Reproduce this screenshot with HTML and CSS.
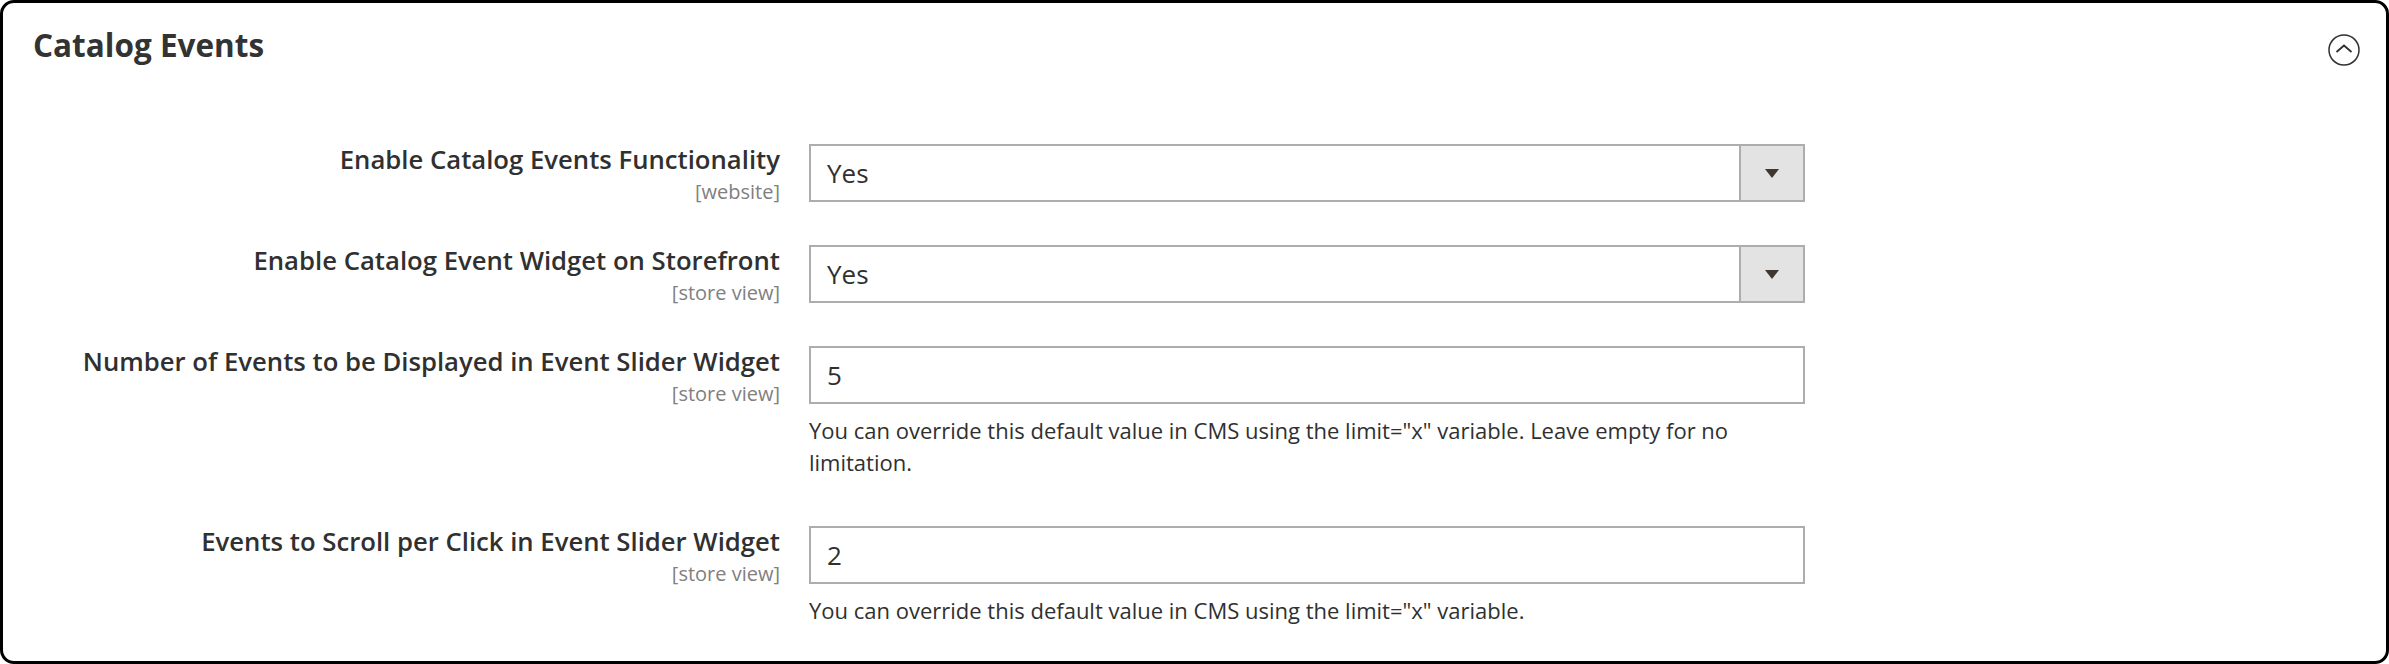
FILE: index.html
```html
<!DOCTYPE html>
<html lang="en">
<head>
    <meta charset="UTF-8">
    <meta name="viewport" content="width=device-width, initial-scale=1.0">
    <title>Catalog Events</title>
    <link rel="stylesheet" href="styles.css">
</head>
<body>
    <div class="section">
        <!-- section header -->
        <div class="section-head">
            <h2 class="section-title">Catalog Events</h2>
            <span class="toggle">
                <svg width="32" height="32" viewBox="0 0 32 32">
                    <circle cx="16" cy="16" r="15" fill="none" stroke="#303030" stroke-width="1.5"/>
                    <polyline points="8.5,18 16,11.5 23.5,18" fill="none" stroke="#303030" stroke-width="1.8"/>
                </svg>
            </span>
        </div>

        <!-- config rows -->
        <div class="fields">
            <div class="field-row">
                <div class="field-label">
                    <label>Enable Catalog Events Functionality</label>
                    <span class="scope">[website]</span>
                </div>
                <div class="field-control">
                    <div class="select">
                        <span class="select-value">Yes</span>
                        <span class="select-arrow"></span>
                    </div>
                </div>
            </div>

            <div class="field-row">
                <div class="field-label">
                    <label>Enable Catalog Event Widget on Storefront</label>
                    <span class="scope">[store view]</span>
                </div>
                <div class="field-control">
                    <div class="select">
                        <span class="select-value">Yes</span>
                        <span class="select-arrow"></span>
                    </div>
                </div>
            </div>

            <div class="field-row">
                <div class="field-label">
                    <label>Number of Events to be Displayed in Event Slider Widget</label>
                    <span class="scope">[store view]</span>
                </div>
                <div class="field-control">
                    <div class="input">5</div>
                    <p class="note">You can override this default value in CMS using the limit="x" variable. Leave empty for no limitation.</p>
                </div>
            </div>

            <div class="field-row">
                <div class="field-label">
                    <label>Events to Scroll per Click in Event Slider Widget</label>
                    <span class="scope">[store view]</span>
                </div>
                <div class="field-control">
                    <div class="input">2</div>
                    <p class="note">You can override this default value in CMS using the limit="x" variable.</p>
                </div>
            </div>
        </div>
    </div>
</body>
</html>
```

FILE: styles.css
```css
body {
    margin: 0;
    background-color: white;
    font-family: "Open Sans", "Liberation Sans", sans-serif;
    color: #303030;
}
.section {
    box-sizing: border-box;
    height: 664px;
    border: 3px solid #000;
    border-radius: 14px;
    padding: 23px 26px 0 30px;
}
.section-head {
    display: flex;
    justify-content: space-between;
    align-items: flex-start;
}
.section-title {
    margin: 0;
    font-size: 31.5px;
    font-weight: 700;
    line-height: 38px;
    color: #333;
}
.toggle {
    margin-top: 8px;
    display: flex;
}
.fields {
    margin-top: 78px;
    margin-left: -30px;
}
.field-row {
    display: grid;
    grid-template-columns: 777px 996px;
    column-gap: 29px;
    margin-bottom: 41px;
}
.field-label {
    display: flex;
    flex-direction: column;
    align-items: flex-end;
    text-align: right;
}
.field-label label {
    font-size: 25.7px;
    font-weight: 600;
    line-height: 32px;
    color: #303030;
}
.scope {
    margin-top: 4px;
    font-size: 20px;
    line-height: 24px;
    color: #808080;
}
.select,
.input {
    box-sizing: border-box;
    height: 58px;
    border: 2px solid #adadad;
    background-color: #fff;
    font-size: 26px;
    color: #303030;
    display: flex;
    align-items: center;
}
.select-value {
    flex: 1;
    padding-left: 16px;
}
.input {
    padding-left: 16px;
}
.select-arrow {
    align-self: stretch;
    width: 62px;
    border-left: 2px solid #adadad;
    background-color: #e3e3e3;
    display: flex;
    justify-content: center;
    align-items: center;
}
.select-arrow::after {
    content: "";
    border-left: 7px solid transparent;
    border-right: 7px solid transparent;
    border-top: 9px solid #41362f;
}
.note {
    margin: 10px 0 7px;
    font-size: 22px;
    line-height: 32px;
    color: #303030;
}
```
